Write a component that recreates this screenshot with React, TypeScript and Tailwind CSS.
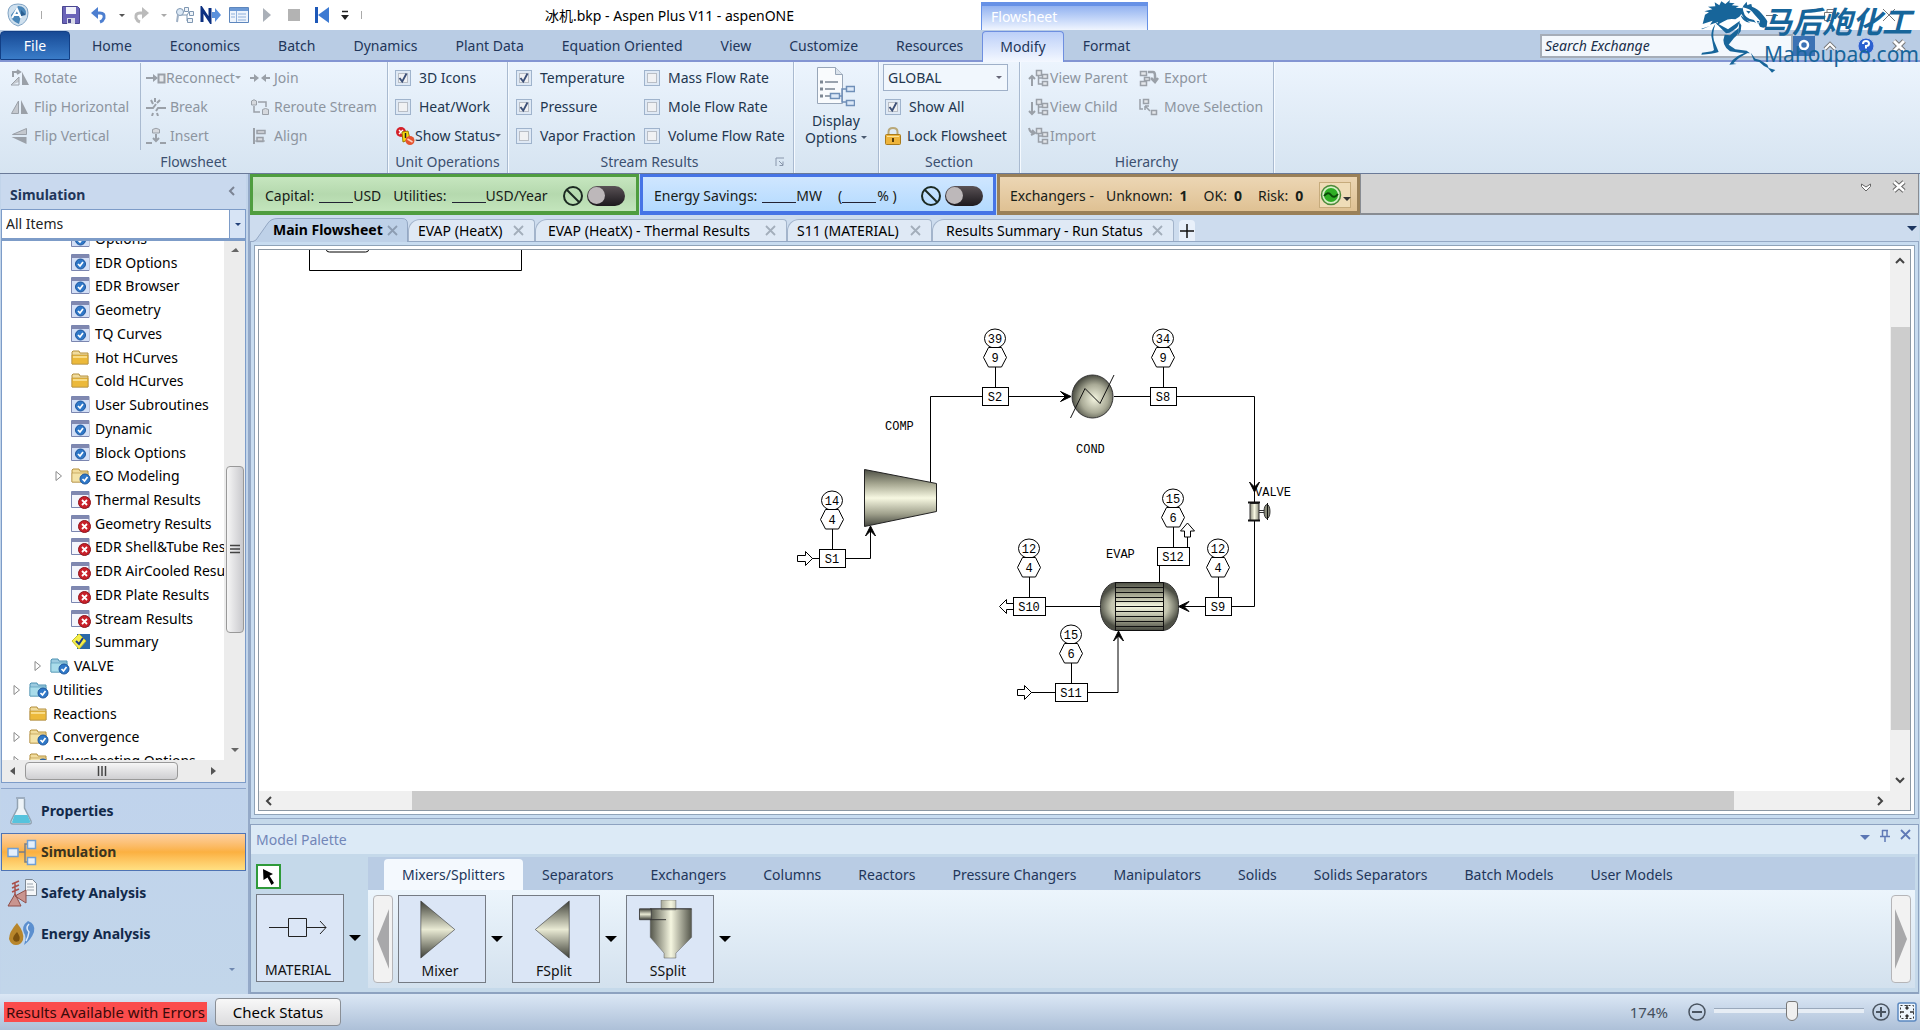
import type { ReactNode } from "react";

/* ---------- generic pieces ---------- */

const GRAY = "#9aa0a8";
const BLUE = "#6f8fb8";

function Ico({ children, w = 20, h = 18 }: { children: ReactNode; w?: number; h?: number }) {
  return (
    <svg width={w} height={h} viewBox={`0 0 ${w} ${h}`} className="shrink-0" aria-hidden="true">
      {children}
    </svg>
  );
}

function Caret({ color = "#4a5a70", size = 8 }: { color?: string; size?: number }) {
  return (
    <svg width={size} height={size / 2} viewBox="0 0 8 4" className="shrink-0" aria-hidden="true">
      <path d="M0 0h8L4 4z" fill={color} />
    </svg>
  );
}

function Check({ label, on = false }: { label: string; on?: boolean }) {
  return (
    <label className="flex h-[29px] items-center gap-2">
      <span className="grid size-4 place-items-center">
        <input
          type="checkbox"
          defaultChecked={on}
          className="peer col-start-1 row-start-1 size-4 appearance-none border border-[#9fb3cc] bg-[#f0f1f3] shadow-[inset_0_0_0_2px_#dfe9f5,inset_0_0_0_3px_#b9bec6]"
        />
        <svg
          viewBox="0 0 12 12"
          className="pointer-events-none invisible col-start-1 row-start-1 size-3 peer-checked:visible"
          aria-hidden="true"
        >
          <path d="M2.5 6l2.7 3.6L9.5 1.5" fill="none" stroke="#3c5078" strokeWidth="1.9" />
        </svg>
      </span>
      {label}
    </label>
  );
}

function Tool({
  label,
  icon,
  muted = true,
  caret = false,
  tight = false,
}: {
  label: string;
  icon: ReactNode;
  muted?: boolean;
  caret?: boolean;
  tight?: boolean;
}) {
  return (
    <button
      type="button"
      className={`flex h-[29px] items-center whitespace-nowrap ${tight ? "gap-0" : "gap-1"} ${
        muted ? "text-[#8d95a0]" : "text-[#22364f]"
      }`}
    >
      {icon}
      {label}
      {caret && <Caret color={muted ? GRAY : "#4a5a70"} size={6} />}
    </button>
  );
}

function Group({ width, title, corner, children }: { width: string; title: string; corner?: boolean; children: ReactNode }) {
  return (
    <section className={`flex shrink-0 flex-col border-r border-[#a9bad0] shadow-[1px_0_0_#f5faff] ${width}`}>
      <div className="h-[89px] pt-px">{children}</div>
      <div className="flex items-center justify-center text-[#3c5070]">
        <span className="grow text-center leading-[22px]">{title}</span>
        {corner && (
          <button type="button" aria-label="More stream result options" className="mr-2 -ml-4">
            <Ico w={10} h={10}>
              <path d="M1 9V1h8M4 4l4 4M8 4.5V8.500H4.500" fill="none" stroke="#8896ab" />
            </Ico>
          </button>
        )}
      </div>
    </section>
  );
}

/* ---------- ribbon icons ---------- */

const RotateIcon = (
  <Ico>
    <path d="M3 8V3h6M7 1l3 2-3 2" fill="none" stroke={GRAY} strokeWidth="2" />
    <path d="M1 16l8-3V8z" fill="#c4c8ce" />
    <path d="M1 16h8V8z" fill="none" stroke={GRAY} />
    <path d="M12 3l7 13h-7z" fill={GRAY} />
  </Ico>
);
const FlipHIcon = (
  <Ico>
    <path d="M8.500 3v12.500h-7z" fill="#c4c8ce" stroke={GRAY} />
    <path d="M11 2l7 14h-7z" fill={GRAY} />
  </Ico>
);
const FlipVIcon = (
  <Ico>
    <path d="M16.500 1.500v6h-14z" fill="#c4c8ce" stroke={GRAY} />
    <path d="M1.500 10h15v7z" fill={GRAY} />
  </Ico>
);
const ReconnectIcon = (
  <Ico>
    <path d="M0 8h7V5l5 4-5 4v-3H0z" fill={GRAY} />
    <path d="M12.500 5.500h6v8h-6z" fill="#e6e9ed" stroke={GRAY} strokeWidth="2" />
  </Ico>
);
const BreakIcon = (
  <Ico>
    <path d="M0 10h7l3-4M20 10h-8l-2 3M5 2l2 4M9 0v4M14 2l-3 3M6 18l1-3M12 18l-1-3" fill="none" stroke={GRAY} strokeWidth="2" />
  </Ico>
);
const InsertIcon = (
  <Ico>
    <path d="M6.500 6V2.500Q10 0 13.500 2.500V6z" fill="#d6d9de" stroke={GRAY} />
    <path d="M10 7v6M7 11l3 3 3-3M0 16h6M14 16h6" fill="none" stroke={GRAY} strokeWidth="2" />
  </Ico>
);
const JoinIcon = (
  <Ico>
    <path d="M0 8h4V5l5 4-5 4v-3H0zM20 8h-4V5l-5 4 5 4v-3h4z" fill={GRAY} />
  </Ico>
);
const RerouteIcon = (
  <Ico>
    <path d="M1.500 7V3Q4 .5 6.500 3v4zM12.500 16.500v-5q3-2 6 0v5z" fill="#d6d9de" stroke={GRAY} />
    <path d="M4 8v6h6M8 4h8v5" fill="none" stroke={GRAY} strokeWidth="1.500" />
  </Ico>
);
const AlignIcon = (
  <Ico>
    <path d="M4 1v16" stroke={GRAY} strokeWidth="2" />
    <path d="M7 3.500h8v3H7zM7 10.500h6v4H7z" fill="#d6d9de" stroke={GRAY} strokeWidth="1.500" />
    <path d="M5 14h10" stroke={GRAY} />
  </Ico>
);
const StatusIcon = (
  <Ico>
    <circle cx="6" cy="5" r="5" fill="#d4202a" />
    <path d="M4 3l4 4M8 3L4 7" stroke="#fff" strokeWidth="1.500" />
    <path d="M7 5l6-1 2 8-7 3z" fill="#f7d90f" stroke="#9a7b00" />
    <path d="M10.500 6v5" stroke="#222" strokeWidth="1.500" />
    <circle cx="15" cy="13.500" r="4.500" fill="#e5532f" />
    <path d="M12.500 12l5 3" stroke="#fbd0bf" strokeWidth="1.500" />
  </Ico>
);
const LockIcon = (
  <Ico>
    <path d="M5.500 9V5q0-4 4.500-4t4.500 4v4" fill="none" stroke="#b9a878" strokeWidth="2" />
    <rect x="2.500" y="7.500" width="15" height="10" rx="1" fill="#eeb43b" stroke="#a87a1c" />
    <path d="M4 9.500h12" stroke="#fbe39a" />
    <path d="M10 11v4" stroke="#5a3d08" strokeWidth="2" />
  </Ico>
);

function TreeGlyph({ arrow }: { arrow: string }) {
  return (
    <Ico w={22}>
      <path d="M8.500 1.500h5v5h-5zM14.500 5.500h5v4h-5zM14.500 12.500h5v4h-5z" fill="#e3e6ea" stroke={GRAY} strokeWidth="1.500" />
      <path d="M10.500 7v8h4M10.500 9h4" fill="none" stroke={GRAY} strokeWidth="1.500" />
      <path d={arrow} fill="none" stroke={GRAY} strokeWidth="2" />
    </Ico>
  );
}
const ExportIcon = (
  <Ico w={22}>
    <path d="M2.500 2.500h6v4h-6zM6.500 8.500h5v3h-5zM2.500 12.500h6v4h-6z" fill="#e3e6ea" stroke={GRAY} strokeWidth="1.500" />
    <path d="M10 3h5q2 0 2 4v5M13 9l4 4 3-4" fill="none" stroke={GRAY} strokeWidth="2.500" />
  </Ico>
);
const MoveIcon = (
  <Ico w={22}>
    <path d="M5.500 1.500h5v4h-5zM13.500 12.500h5v4h-5z" fill="#e3e6ea" stroke={GRAY} strokeWidth="1.500" />
    <path d="M2 1v10h3M7 8h4M7 8v4M7 8l5 5" fill="none" stroke={GRAY} strokeWidth="1.500" />
  </Ico>
);

/* ---------- title bar ---------- */

function TitleBar() {
  return (
    <header className="flex h-[30px] items-center bg-white text-black">
      <div className="flex w-[545px] shrink-0 items-center pl-[7px]">
        <svg width="22" height="24" viewBox="0 0 22 24" aria-hidden="true">
          <path d="M11 1q10 0 10 9 0 10-10 13Q1 20 1 10 1 1 11 1z" fill="#cfe0ee" stroke="#7fa3c4" />
          <path d="M11 3q8 0 8 8l-5 2-2 8q-8-3-8-9z" fill="#4a86b8" />
          <path d="M5 15l5-9 4 9M7 12h6" fill="none" stroke="#fff" strokeWidth="2" />
          <path d="M14 7l5 5-5 1z" fill="#2b5f92" />
        </svg>
        <span className="ml-3 h-2 w-px bg-[#aaa]" />
        <button type="button" aria-label="Save" className="ml-5">
          <Ico w={18}>
            <path d="M.5.5h15l2 2v15H.5z" fill="#6a63b8" stroke="#4a4790" />
            <path d="M4 1h10v7H4z" fill="#f2f2fa" />
            <path d="M5 12h8v6H5z" fill="#d9dbe8" />
            <path d="M6 13h3v4H6z" fill="#4a4790" />
          </Ico>
        </button>
        <button type="button" aria-label="Undo" className="ml-[11px] flex items-center gap-3">
          <Ico w={16}>
            <path d="M4 7h5q5 0 4 5-1 3-4 4" fill="none" stroke="#4d7fd0" strokeWidth="3" />
            <path d="M7 1v12L0 7z" fill="#4d7fd0" />
          </Ico>
          <Caret color="#555" size={6} />
        </button>
        <button type="button" aria-label="Redo" className="ml-2 flex items-center gap-3">
          <Ico w={16}>
            <path d="M12 7H7q-5 0-4 5 1 3 4 4" fill="none" stroke="#bbb" strokeWidth="3" />
            <path d="M9 1v12l7-6z" fill="#bbb" />
          </Ico>
          <Caret color="#aaa" size={6} />
        </button>
        <button type="button" aria-label="Model summary" className="ml-2">
          <Ico>
            <path d="M9.500 1.500h4v4h-4zM14.500 5.500h4v4h-4zM12.500 12.500h5v4h-5z" fill="#eef3f8" stroke="#7f97b2" />
            <path d="M6 9h6l2-3M12 9v6" fill="none" stroke="#7f97b2" />
            <circle cx="5" cy="6" r="3.500" fill="#dbe8f5" stroke="#7f97b2" />
            <path d="M3 9l-1 7" stroke="#9fb0c4" strokeWidth="2" />
          </Ico>
        </button>
        <button type="button" aria-label="Next" className="ml-[5px]">
          <Ico w={22}>
            <path d="M2 16V3l8 12V2" fill="none" stroke="#0b2f80" strokeWidth="3" />
            <path d="M12 6h3V2l6 7-6 7v-4h-3z" fill="#5a90dc" />
          </Ico>
        </button>
        <button type="button" aria-label="Control panel" className="ml-[7px]">
          <Ico>
            <path d="M.5 1.500h19v15H.5z" fill="#eef4fc" stroke="#5d86bd" />
            <path d="M1 2h18v3H1z" fill="#6d9ad6" />
            <path d="M7.500 5v11M9 8h8M9 11h8M9 14h8M2 8h4M2 11h4" stroke="#8fb0dc" />
          </Ico>
        </button>
        <button type="button" aria-label="Run" className="ml-[13px]">
          <Ico w={10}>
            <path d="M1 2l8 7-8 7z" fill="#aab0b8" />
          </Ico>
        </button>
        <button type="button" aria-label="Stop" className="ml-4">
          <Ico w={12}>
            <path d="M0 3h12v12H0z" fill="#b3b3b3" />
          </Ico>
        </button>
        <button type="button" aria-label="Reset" className="ml-[14px]">
          <Ico w={16}>
            <path d="M1 1h3v16H1z" fill="#1d58b8" />
            <path d="M15 1v16L4 9z" fill="#3d7ad2" />
          </Ico>
        </button>
        <button type="button" aria-label="Customize toolbar" className="ml-[11px]">
          <Ico w={8} h={10}>
            <path d="M1 1.500h6" stroke="#222" strokeWidth="1.500" />
            <path d="M0 5h8L4 10z" fill="#222" />
          </Ico>
        </button>
        <span className="ml-3 h-2 w-px bg-[#aaa]" />
      </div>
      <h1 className="w-[436px] shrink-0 pt-[2px] whitespace-nowrap">冰机.bkp - Aspen Plus V11 - aspenONE</h1>
      <div className="mt-[2px] h-7 w-[167px] shrink-0 border-x border-t-4 border-[#6691e6] bg-linear-to-b from-[#92b2f0] to-[#f0f5fe] px-[9px] leading-[22px] text-white">
        Flowsheet
      </div>
      <div className="flex grow items-center justify-end gap-[46px] pr-6 text-[#777]">
        <button type="button" aria-label="Minimize">
          <Ico w={12} h={12}>
            <path d="M0 6.500h12" stroke="#777" />
          </Ico>
        </button>
        <button type="button" aria-label="Restore">
          <Ico w={12} h={12}>
            <path d="M.5 3.500h8v8h-8zM3 3V.5h8.500V9H9" fill="none" stroke="#777" />
          </Ico>
        </button>
        <button type="button" aria-label="Close">
          <Ico w={14} h={14}>
            <path d="M1 1l12 12M13 1L1 13" stroke="#777" />
          </Ico>
        </button>
      </div>
    </header>
  );
}

const ribbonTabs = [
  "Home", "Economics", "Batch", "Dynamics", "Plant Data", "Equation Oriented",
  "View", "Customize", "Resources", "Modify", "Format",
];

function TabBar() {
  return (
    <nav className="flex h-8 items-end border-b-2 border-[#8395d2] bg-[#b9cce4] text-[#22365a]">
      <button type="button" className="mr-[3px] h-[29px] w-[70px] rounded-t border border-[#123f86] bg-linear-to-b from-[#174a96] to-[#3a7cc8] pt-px text-white">
        File
      </button>
      {ribbonTabs.map((t) => (
        <button
          key={t}
          type="button"
          className={
            t === "Modify"
              ? "-mb-[2px] h-[31px] rounded-t border border-b-0 border-[#6e8fe0] bg-linear-to-b from-[#bccff8] to-[#f4f8ff] px-[17px]"
              : "h-[29px] px-[19px] pt-px whitespace-nowrap"
          }
        >
          {t}
        </button>
      ))}
      <div className="flex grow items-center justify-end self-center pt-px pr-[14px]">
        <input
          aria-label="Search Exchange"
          placeholder="Search Exchange"
          className="h-6 w-[253px] border-2 border-[#a5adb8] bg-[#f3f8fd] px-[3px] italic text-[#1a2f4a] placeholder:text-[#1a2f4a]"
        />
        <button type="button" aria-label="Search" className="grid h-5 w-[22px] place-items-center bg-[#3c72b4]">
          <Ico w={14} h={14}>
            <circle cx="7" cy="6" r="4" fill="none" stroke="#fff" strokeWidth="2.500" />
          </Ico>
        </button>
        <button type="button" aria-label="Collapse ribbon" className="ml-2">
          <Ico w={14} h={12}>
            <path d="M2 9l5-5 5 5" fill="none" stroke="#777" strokeWidth="4" />
            <path d="M2 9l5-5 5 5" fill="none" stroke="#fff" strokeWidth="2" />
          </Ico>
        </button>
        <button type="button" aria-label="Help" className="ml-5">
          <Ico w={18}>
            <circle cx="9" cy="9" r="8" fill="#2b5fd0" stroke="#b8c8ea" />
            <path d="M6 7q0-3 3-3t3 2.500Q12 9 9 9v2.500M9 13v2" fill="none" stroke="#fff" strokeWidth="2" />
          </Ico>
        </button>
        <button type="button" aria-label="Close document" className="ml-[17px]">
          <Ico w={14} h={14}>
            <path d="M2 2l10 10M12 2L2 12" stroke="#777" strokeWidth="5" />
            <path d="M2 2l10 10M12 2L2 12" stroke="#fff" strokeWidth="3" />
          </Ico>
        </button>
      </div>
    </nav>
  );
}

function Ribbon() {
  return (
    <div className="flex h-[112px] border-b border-[#6a7a98] bg-linear-to-b from-[#ecf4fd] to-[#d6e4f1] text-[#22364f]">
      <Group width="w-[388px]" title="Flowsheet">
        <div className="flex">
          <div className="w-[141px] border-r border-[#a9bad0] pl-[10px]">
            <Tool label="Rotate" icon={RotateIcon} />
            <Tool label="Flip Horizontal" icon={FlipHIcon} />
            <Tool label="Flip Vertical" icon={FlipVIcon} />
          </div>
          <div className="w-[109px] pl-[5px]">
            <Tool label="Reconnect" icon={ReconnectIcon} caret tight />
            <Tool label="Break" icon={BreakIcon} />
            <Tool label="Insert" icon={InsertIcon} />
          </div>
          <div>
            <Tool label="Join" icon={JoinIcon} />
            <Tool label="Reroute Stream" icon={RerouteIcon} />
            <Tool label="Align" icon={AlignIcon} />
          </div>
        </div>
      </Group>
      <Group width="w-[120px]" title="Unit Operations">
        <div className="pl-[7px]">
          <Check label="3D Icons" on />
          <Check label="Heat/Work" />
          <Tool label="Show Status" icon={StatusIcon} muted={false} caret tight />
        </div>
      </Group>
      <Group width="w-[286px]" title="Stream Results" corner>
        <div className="flex">
          <div className="w-[136px] pl-2">
            <Check label="Temperature" on />
            <Check label="Pressure" on />
            <Check label="Vapor Fraction" />
          </div>
          <div>
            <Check label="Mass Flow Rate" />
            <Check label="Mole Flow Rate" />
            <Check label="Volume Flow Rate" />
          </div>
        </div>
      </Group>
      <Group width="w-[85px]" title="">
        <button type="button" className="flex w-full flex-col items-center pt-1 leading-[17px]">
          <svg width="38" height="42" viewBox="0 0 38 42" aria-hidden="true">
            <path d="M.5.500h18l7 7v29H.5z" fill="#f9fbfd" stroke="#98a6b8" />
            <path d="M18.500.500v7h7" fill="#dbe3ec" stroke="#98a6b8" />
            <path d="M8 15h13M8 22h10M8 29h8" stroke="#9aa3ae" strokeWidth="2" />
            <path d="M3 15h3M3 22h3M3 29h3" stroke="#7d8793" strokeWidth="3" />
            <path d="M21 29h4V22h5M25 29v6h5" fill="none" stroke={BLUE} strokeWidth="1.500" />
            <path d="M13.500 26.500h9v5h-9zM29.500 19.500h8v5h-8zM29.500 33.500h8v5h-8z" fill="#dce9f8" stroke={BLUE} strokeWidth="1.500" />
          </svg>
          <span className="mt-[3px]">Display</span>
          <span className="flex items-center gap-1">
            Options <Caret size={6} />
          </span>
        </button>
      </Group>
      <Group width="w-[141px]" title="Section">
        <div className="pl-1">
          <div className="flex h-[29px] items-center">
            <div className="grid w-[125px] items-center">
              <select aria-label="Section" className="col-start-1 row-start-1 h-[27px] w-full appearance-none border border-[#9fb0c8] bg-[#f1f7fd] px-1">
                <option>GLOBAL</option>
              </select>
              <span className="pointer-events-none col-start-1 row-start-1 justify-self-end pr-[6px]">
                <Caret color="#667" size={6} />
              </span>
            </div>
          </div>
          <div className="pl-[2px]">
            <Check label="Show All" on />
          </div>
          <Tool label="Lock Flowsheet" icon={LockIcon} muted={false} />
        </div>
      </Group>
      <Group width="w-[254px]" title="Hierarchy">
        <div className="flex">
          <div className="w-[118px] pl-2">
            <Tool label="View Parent" icon={<TreeGlyph arrow="M4 17V7M1 10l3-3 3 3" />} tight />
            <Tool label="View Child" icon={<TreeGlyph arrow="M4 4v12M1 13l3 3 3-3" />} tight />
            <Tool label="Import" icon={<TreeGlyph arrow="M1 1q1 5 5 5M4 3l3 3-4 2" />} tight />
          </div>
          <div>
            <Tool label="Export" icon={ExportIcon} />
            <Tool label="Move Selection" icon={MoveIcon} />
          </div>
        </div>
      </Group>
    </div>
  );
}

/* ---------- sidebar ---------- */

type Kind = "form" | "folder" | "folderok" | "blueok" | "error" | "summary";

const tree: { label: string; kind: Kind; level: string; open?: boolean }[] = [
  { label: "Options", kind: "form", level: "pl-[53px]" },
  { label: "EDR Options", kind: "form", level: "pl-[53px]" },
  { label: "EDR Browser", kind: "form", level: "pl-[53px]" },
  { label: "Geometry", kind: "form", level: "pl-[53px]" },
  { label: "TQ Curves", kind: "form", level: "pl-[53px]" },
  { label: "Hot HCurves", kind: "folder", level: "pl-[53px]" },
  { label: "Cold HCurves", kind: "folder", level: "pl-[53px]" },
  { label: "User Subroutines", kind: "form", level: "pl-[53px]" },
  { label: "Dynamic", kind: "form", level: "pl-[53px]" },
  { label: "Block Options", kind: "form", level: "pl-[53px]" },
  { label: "EO Modeling", kind: "folderok", level: "pl-[53px]", open: true },
  { label: "Thermal Results", kind: "error", level: "pl-[53px]" },
  { label: "Geometry Results", kind: "error", level: "pl-[53px]" },
  { label: "EDR Shell&Tube Results", kind: "error", level: "pl-[53px]" },
  { label: "EDR AirCooled Results", kind: "error", level: "pl-[53px]" },
  { label: "EDR Plate Results", kind: "error", level: "pl-[53px]" },
  { label: "Stream Results", kind: "error", level: "pl-[53px]" },
  { label: "Summary", kind: "summary", level: "pl-[53px]" },
  { label: "VALVE", kind: "blueok", level: "pl-[32px]", open: true },
  { label: "Utilities", kind: "blueok", level: "pl-[11px]", open: true },
  { label: "Reactions", kind: "folder", level: "pl-[11px]" },
  { label: "Convergence", kind: "folderok", level: "pl-[11px]", open: true },
  { label: "Flowsheeting Options", kind: "folderok", level: "pl-[11px]", open: true },
];

function OkBadge({ x, y }: { x: number; y: number }) {
  return (
    <>
      <circle cx={x} cy={y} r="5" fill="#2f78c8" stroke="#1d559c" />
      <path d={`M${x - 2.5} ${y}l2 2 3-4`} fill="none" stroke="#fff" strokeWidth="1.700" />
    </>
  );
}

function TreeIcon({ kind }: { kind: Kind }) {
  return (
    <Ico>
      {(kind === "form" || kind === "error") && (
        <>
          <path d="M.5.500h17.500v16H.5z" fill="#f3f5fc" stroke="#7b86b0" />
          <path d="M1 1h17v3H1z" fill="#8088b0" />
          {kind === "form" && <path d="M1 4h17v12H1z" fill="#d3dff6" />}
        </>
      )}
      {kind === "form" && <OkBadge x={9.5} y={10} />}
      {kind === "error" && (
        <>
          <circle cx="13.500" cy="11.500" r="6" fill="#c8202a" stroke="#8e1219" />
          <path d="M11 9l5 5M16 9l-5 5" stroke="#fff" strokeWidth="1.800" />
        </>
      )}
      {(kind === "folder" || kind === "folderok") && (
        <>
          <path d="M1 15V3l1-1h6l1 2h8v11z" fill="#f1dc9d" stroke="#b48f3c" />
          <path d="M1 6h16v9H1z" fill={kind === "folder" ? "#ecb93a" : "#f4e3a8"} stroke="#b48f3c" strokeWidth=".6" />
          {kind === "folder" && <path d="M2 7h14v2H2z" fill="#f8dc88" />}
        </>
      )}
      {kind === "blueok" && (
        <>
          <path d="M1 15V3l1-1h6l1 2h8v11z" fill="#9ccbe0" stroke="#4f93b3" />
          <path d="M1 6h16v9H1z" fill="#a9dcea" stroke="#4f93b3" strokeWidth=".6" />
        </>
      )}
      {(kind === "folderok" || kind === "blueok") && <OkBadge x={14} y={12} />}
      {kind === "summary" && (
        <>
          <path d="M6 1h13v15H6z" fill="#2c69a8" />
          <path d="M8 1l7 7-7 8-7-8z" fill="#f4ee4c" stroke="#c8c02a" />
          <path d="M5 8l3 3 4-6" fill="none" stroke="#183a8a" strokeWidth="2" />
        </>
      )}
    </Ico>
  );
}

const modes: { label: string; icon: ReactNode }[] = [
  {
    label: "Properties",
    icon: (
      <Ico w={28} h={28}>
        <path d="M9 1h9M10.500 2v9L4 24q-1 3 2 3h16q3 0 2-3l-6.500-13V2" fill="#eef4f8" stroke="#93a3b2" strokeWidth="1.500" />
        <path d="M7.500 18h13l3 7q0 1-2 1h-15q-2 0-1.500-1z" fill="#56c3dd" />
      </Ico>
    ),
  },
  {
    label: "Simulation",
    icon: (
      <Ico w={30} h={28}>
        <path d="M12 14h6M18 14V6h4M18 14v10h4" fill="none" stroke="#7a7f86" strokeWidth="1.500" />
        <path d="M1 10.500h10v8H1zM20.500 2.500h8v8h-8zM20.500 19.500h8v7h-8z" fill="#e4effc" stroke="#6f9fd6" strokeWidth="1.500" />
      </Ico>
    ),
  },
  {
    label: "Safety Analysis",
    icon: (
      <Ico w={30} h={28}>
        <path d="M18.500.500h7l4 4v12h-11z" fill="#f5f7f9" stroke="#7d8894" />
        <path d="M20 5h6M20 8h7M20 11h7" stroke="#9aa4ae" />
        <path d="M1 27l7-12 6 12zM8 17l11-6v13z" fill="#c99590" stroke="#8f4f4a" />
        <path d="M8 16V3M5 5l7-3M5 9l7-3M5 13l7-3" fill="none" stroke="#a8504c" strokeWidth="1.500" />
      </Ico>
    ),
  },
  {
    label: "Energy Analysis",
    icon: (
      <Ico w={30} h={28}>
        <path d="M10 3q8 10 6 17-2 5-7 5t-7-6Q2 12 10 3z" fill="#b8862b" />
        <path d="M10 12q4 5 2 9-5 2-6-2 0-3 4-7z" fill="#7c520f" />
        <path d="M21 1q8 3 6 11-3 8-10 13 3-8 0-12-3-7 4-12z" fill="#5b8fcf" />
        <path d="M22 4q-4 4 0 8-1 6-3 9" fill="none" stroke="#dbe9fa" strokeWidth="1.500" />
      </Ico>
    ),
  },
];

function Grip({ vertical = false }: { vertical?: boolean }) {
  return (
    <svg width="10" height="10" viewBox="0 0 10 10" className={vertical ? "" : "rotate-90"} aria-hidden="true">
      <path d="M0 1.500h10M0 5h10M0 8.500h10" stroke="#444" strokeWidth="1.500" />
    </svg>
  );
}

function Sidebar() {
  return (
    <aside className="flex w-[250px] shrink-0 flex-col border-r-2 border-[#94a9c8] bg-[#c1d4ea] pr-[2px] pl-px">
      <div className="flex h-[35px] shrink-0 items-center justify-between bg-[#c9d9ee] pt-[6px] pr-[10px] pl-[9px] font-bold text-[#22365a]">
        Simulation
        <button type="button" aria-label="Collapse navigation" className="pb-2">
          <Ico w={8} h={10}>
            <path d="M6 1L2 5l4 4" fill="none" stroke="#7b8494" strokeWidth="2" />
          </Ico>
        </button>
      </div>
      <div className="grid shrink-0 items-center">
        <select aria-label="Filter" className="col-start-1 row-start-1 h-[30px] w-full appearance-none border border-[#7d9cc8] bg-white px-1 text-[#222]">
          <option>All Items</option>
        </select>
        <span className="pointer-events-none col-start-1 row-start-1 mr-px grid h-[28px] w-4 place-items-center justify-self-end border-l border-[#7d9cc8] bg-[#d7e4f5]">
          <Caret color="#24427a" size={6} />
        </span>
      </div>
      <div className="flex min-h-0 grow flex-col border border-t-2 border-[#7d9cc8] bg-white">
        <div className="flex min-h-0 grow">
          <ul className="-mt-[14px] -mb-[13px] grid h-[546px] min-w-0 grow auto-rows-fr overflow-hidden text-black [clip-path:inset(14px_0_13px_0)]">
            {tree.map((n) => (
              <li key={n.label} className={`flex items-center whitespace-nowrap ${n.level}`}>
                <span className="w-4 shrink-0">
                  {n.open && (
                    <Ico w={8} h={12}>
                      <path d="M1 1.500v9L6.500 6z" fill="#fff" stroke="#8a8a8a" />
                    </Ico>
                  )}
                </span>
                <TreeIcon kind={n.kind} />
                <span className="pl-1">{n.label}</span>
              </li>
            ))}
          </ul>
          <div className="flex w-[21px] shrink-0 flex-col items-center justify-between bg-[#ececec] pt-[6px] pb-2">
            <Ico w={8} h={6}>
              <path d="M0 5h8L5 1z" fill="#666" />
            </Ico>
            <div className="mt-[97px] grid h-[167px] w-[18px] place-items-center rounded-sm border border-[#999] bg-linear-to-r from-[#f6f6f6] to-[#c9c9cd]">
              <Grip vertical />
            </div>
            <Caret color="#666" />
          </div>
        </div>
        <div className="flex h-[22px] shrink-0 items-center bg-[#ececec] pr-[29px] pl-2">
          <svg width="5" height="8" viewBox="0 0 5 8" aria-hidden="true"><path d="M5 0v8L0 4z" fill="#555" /></svg>
          <div className="ml-[10px] grid h-[18px] w-[153px] place-items-center rounded-sm border border-[#999] bg-linear-to-b from-[#f6f6f6] to-[#cfcfd2]">
            <Grip />
          </div>
          <svg width="5" height="8" viewBox="0 0 5 8" className="ml-auto" aria-hidden="true"><path d="M0 0v8l5-4z" fill="#555" /></svg>
        </div>
      </div>
      <div className="mb-[1px] h-[6px] shrink-0 border-b border-[#8ea6cc] bg-[#c3d4ec]" />
      <nav className="flex h-[204px] shrink-0 flex-col gap-[3px] bg-linear-to-b from-[#c0d3ec] to-[#c2d6ea] pt-[2px] font-bold text-[#12294a]">
        {modes.map((m) => (
          <button
            key={m.label}
            type="button"
            className={`flex h-[38px] items-center gap-1 border pl-[5px] ${
              m.label === "Simulation"
                ? "border-[#4f74b4] bg-linear-to-b from-[#fdd0a0] via-[#fbb040] to-[#ffe082] text-[#3a3420]"
                : "border-transparent"
            }`}
          >
            <span className="w-[30px]">{m.icon}</span>
            {m.label}
          </button>
        ))}
        <button type="button" aria-label="Configure buttons" className="mt-3 mr-[11px] self-end">
          <Caret color="#6f88b0" size={6} />
        </button>
      </nav>
    </aside>
  );
}

/* ---------- activation strip ---------- */

function Toggle({ label }: { label: string }) {
  return (
    <div className="flex items-center gap-[3px]">
      <Ico w={22} h={22}>
        <circle cx="11" cy="11" r="9" fill="none" stroke="#1c2a22" strokeWidth="2" />
        <path d="M5 5l12 12" stroke="#1c2a22" strokeWidth="2" />
      </Ico>
      <button
        type="button"
        role="switch"
        aria-checked="false"
        aria-label={label}
        className="flex h-5 w-[38px] items-center rounded-full bg-linear-to-b from-[#5a5256] to-[#1d1a1e] p-px"
      >
        <span className="size-[17px] rounded-full bg-[#bdb8ba]" />
      </button>
    </div>
  );
}

function Blank() {
  return <span className="mt-[13px] ml-[5px] inline-block h-px w-[34px] bg-[#223]" />;
}

function Strip() {
  return (
    <div className="flex h-[41px] shrink-0 text-[#182018]">
      <div className="flex w-[389px] items-center border-3 border-b-4 border-[#4f9d3f] bg-linear-to-b from-[#c6e6bf] via-[#b5d9ae] to-[#c3e5bc] pt-[3px] pr-[11px] pl-3">
        <span>Capital:</span><Blank /><span>USD</span>
        <span className="ml-3">Utilities:</span><Blank /><span>USD/Year</span>
        <div className="ml-auto"><Toggle label="Economics analysis" /></div>
      </div>
      <div className="ml-px flex w-[356px] items-center border-3 border-b-4 border-[#4674e6] bg-linear-to-b from-[#cfe6ff] to-[#b3dafe] pt-[3px] pr-[10px] pl-[11px]">
        <span>Energy Savings:</span><Blank /><span>MW</span>
        <span className="ml-4">(</span><span className="mt-[13px] inline-block h-px w-[34px] bg-[#223]" /><span className="ml-px">% )</span>
        <div className="ml-auto"><Toggle label="Energy analysis" /></div>
      </div>
      <div className="ml-px flex w-[363px] items-center border-3 border-b-4 border-[#9a8058] bg-linear-to-b from-[#ecd6b4] to-[#dfc193] pt-[3px] pr-[6px] pl-[10px]">
        <span>Exchangers -</span>
        <span className="ml-3">Unknown:</span><b className="ml-[7px]">1</b>
        <span className="ml-4">OK:</span><b className="ml-[7px]">0</b>
        <span className="ml-4">Risk:</span><b className="ml-[7px]">0</b>
        <button type="button" aria-label="Exchanger status" className="mb-[2px] ml-auto flex h-[26px] w-8 items-end gap-px border border-[#c6ab7c] bg-[#efdcb8] pb-px">
          <Ico w={22} h={22}>
            <circle cx="11" cy="11" r="9.500" fill="#d8efc8" stroke="#4c8a3a" strokeWidth="1.500" />
            <circle cx="11" cy="11" r="7" fill="#2fae26" />
            <path d="M4 12q4-5 7-1t7-1" fill="none" stroke="#0a4a08" strokeWidth="2" />
          </Ico>
          <span className="pb-[5px]"><Caret color="#333" size={8} /></span>
        </button>
      </div>
      <div className="flex grow items-start justify-end gap-5 border border-t-0 border-b-2 border-[#888c92] bg-[#d3d3d3] pt-[6px] pr-3">
        <button type="button" aria-label="Strip options" className="pt-[2px]">
          <Ico w={12} h={10}>
            <path d="M1.500 2l4.500 3 4.500-3v2.500L6 9 1.500 4.500z" fill="#fff" stroke="#666" />
          </Ico>
        </button>
        <button type="button" aria-label="Close strip">
          <Ico w={14} h={13}>
            <path d="M2 2l10 9M12 2L2 11" stroke="#666" strokeWidth="4.500" />
            <path d="M2 2l10 9M12 2L2 11" stroke="#fff" strokeWidth="2.500" />
          </Ico>
        </button>
      </div>
    </div>
  );
}

/* ---------- document tabs ---------- */

const docs = [
  { label: "EVAP (HeatX)", w: "w-[127px] pl-[9px]" },
  { label: "EVAP (HeatX) - Thermal Results", w: "w-[252px] pl-3" },
  { label: "S11 (MATERIAL)", w: "w-[145px] pl-[9px]" },
  { label: "Results Summary - Run Status", w: "w-[242px] pl-[13px]" },
];

function CloseX({ color = "#a3aebb" }: { color?: string }) {
  return (
    <Ico w={11} h={11}>
      <path d="M1 1l9 9M10 1l-9 9" stroke={color} strokeWidth="1.800" />
    </Ico>
  );
}

function DocTabs() {
  return (
    <div className="flex h-[26px] shrink-0 items-end bg-[#cddcee] pl-[2px] text-black">
      <div className="relative -mb-px flex h-6 w-[156px] items-center justify-between pr-[10px] pl-[21px] font-bold">
        <svg viewBox="0 0 156 24" className="absolute inset-0 size-full" aria-hidden="true">
          <path d="M0 24L4 22 16 5Q19 .5 26 .5H150Q155.500.5 155.500 6V24" fill="#bed1e8" stroke="#94a8c4" />
        </svg>
        <span className="relative whitespace-nowrap">Main Flowsheet</span>
        <button type="button" aria-label="Close Main Flowsheet" className="relative"><CloseX color="#8d9db2" /></button>
      </div>
      {docs.map((d) => (
        <div
          key={d.label}
          className={`flex h-[22px] items-center justify-between rounded-tl-xl rounded-tr border border-b-0 border-[#a3b4cb] bg-[#dfe9f5] pr-[10px] whitespace-nowrap ${d.w}`}
        >
          {d.label}
          <button type="button" aria-label={`Close ${d.label}`}><CloseX /></button>
        </div>
      ))}
      <button type="button" aria-label="New tab" className="ml-[5px] grid h-[21px] w-4 place-items-center rounded-t bg-[#e8f0fa]">
        <Ico w={14} h={14}>
          <path d="M7 0v14M0 7h14" stroke="#111" strokeWidth="1.500" />
        </Ico>
      </button>
      <button type="button" aria-label="Tab list" className="mr-[2px] mb-[10px] ml-auto"><Caret color="#1c3560" size={10} /></button>
    </div>
  );
}

/* ---------- flowsheet drawing ---------- */

const streams = [
  { id: "S1", x: 833, y: 549, w: 26, t: 14, p: 4 },
  { id: "S2", x: 996, y: 387, w: 26, t: 39, p: 9 },
  { id: "S8", x: 1164, y: 387, w: 26, t: 34, p: 9 },
  { id: "S12", x: 1174, y: 547, w: 32, t: 15, p: 6 },
  { id: "S9", x: 1219, y: 597, w: 26, t: 12, p: 4 },
  { id: "S10", x: 1030, y: 597, w: 32, t: 12, p: 4 },
  { id: "S11", x: 1072, y: 683, w: 32, t: 15, p: 6 },
];

function Stream({ id, x, y, w, t, p }: (typeof streams)[number]) {
  return (
    <g transform={`translate(${x} ${y})`} textAnchor="middle">
      <rect x={-w / 2 + 0.5} y=".5" width={w} height="18" fill="#fff" stroke="#000" />
      <text x="0" y="14" stroke="none">{id}</text>
      <path d="M.5 0v-20" stroke="#000" fill="none" />
      <ellipse cx="0" cy="-48.500" rx="10.500" ry="9.500" fill="#fff" stroke="#000" />
      <path d="M-11.500-29.500l5-10h13l5 10-5 9.500h-13z" fill="#fff" stroke="#000" />
      <text x="0" y="-44">{t}</text>
      <text x="0" y="-25">{p}</text>
    </g>
  );
}

function Flowsheet() {
  return (
    <svg className="h-full w-full" aria-label="Process flowsheet" role="img">
      <defs>
        <linearGradient id="metalV" x1="0" y1="0" x2="0" y2="1">
          <stop offset="0" stopColor="#4c4e44" />
          <stop offset=".25" stopColor="#a5a690" />
          <stop offset=".5" stopColor="#f7f8e2" />
          <stop offset=".78" stopColor="#9fa08c" />
          <stop offset="1" stopColor="#43453d" />
        </linearGradient>
        <linearGradient id="metalH">
          <stop offset="0" stopColor="#8a8b7c" />
          <stop offset=".5" stopColor="#f7f8e2" />
          <stop offset="1" stopColor="#8a8b7c" />
        </linearGradient>
        <radialGradient id="metalR" cx=".55" cy=".55" r=".55">
          <stop offset="0" stopColor="#f4f5e0" />
          <stop offset=".6" stopColor="#a9aa96" />
          <stop offset="1" stopColor="#4a4c42" />
        </radialGradient>
        <radialGradient id="shell" cx=".5" cy=".5" r=".52">
          <stop offset="0" stopColor="#f7f8e2" />
          <stop offset=".7" stopColor="#c4c5b0" />
          <stop offset="1" stopColor="#4e5046" />
        </radialGradient>
      </defs>
      <g transform="translate(-260 -250)" fontFamily='"Liberation Mono", monospace' fontSize="12" fill="#000">
        <path d="M310.500 240v30.500h212V240M327.500 240v10q0 2 3 2h36q3 0 3-2V240" fill="none" stroke="#000" />

        <path
          d="M812 558.500h8M847 558.500h24.500V529M931.500 482V396.500H983M1010 396.500h60M1115 396.500h36M1178 396.500h77.500V503M1255.500 521v85.500H1233M1206 606.500h-24M1047 606.500h54M1160.500 583V566M1188.500 547V537M1032 692.500h24M1089 692.500h30V634"
          fill="none"
          stroke="#000"
        />
        <path d="M871.500 526l5 10-5-5-5 5zM1072 396.500l-10.500 5 5-5-5-5zM1255.500 492l-5-10 5 5 5-5zM1179.500 606.500l10.500-5-5 5 5 5zM1119.500 631l5 10-5-5-5 5z" stroke="#000" />
        <path
          d="M798.500 555.500h8v-4l7 7-7 7v-4h-8zM1018.500 689.500h7v-4l7 7-7 7v-4h-7zM1014.500 603.500h-7v-4l-7 7 7 7v-4h7zM1185.500 537v-6h-4l7-8 7 8h-4v6z"
          fill="#fff"
          stroke="#000"
        />

        <path d="M865.500 469.500l72 14v28l-72 15z" fill="url(#metalV)" stroke="#222" />
        <ellipse cx="1093.500" cy="396.500" rx="20.500" ry="21.500" fill="url(#metalR)" stroke="#333" />
        <path d="M1071.500 418l14.500-29.500 15 15 14-28.500" fill="none" stroke="#111" />

        <rect x="1101.500" y="582.500" width="78" height="48" rx="16" ry="22" fill="url(#shell)" stroke="#333" />
        <path d="M1116.500 582.500h48v48h-48z" fill="url(#metalV)" stroke="#111" />
        <path d="M1116 587.500h49M1116 592.500h49M1116 597.500h49M1116 601.500h49M1116 606.500h49M1116 611.500h49M1116 616.500h49M1116 621.500h49M1116 626.500h49" stroke="#111" />

        <path d="M1251 503.500h9v17h-9z" fill="url(#metalH)" stroke="#333" />
        <path d="M1249 502.500h12M1249 520.500h12" stroke="#111" strokeWidth="2" />
        <path d="M1260 510.500h6M1260 512.500h6" stroke="#333" />
        <ellipse cx="1268" cy="511.500" rx="3" ry="7" fill="#8a8c7a" stroke="#333" />
        <path d="M1268.500 503v17" stroke="#111" />

        <text x="886" y="430">COMP</text>
        <text x="1077" y="453">COND</text>
        <text x="1107" y="558">EVAP</text>
        <text x="1256" y="496">VALVE</text>
        {streams.map((s) => (
          <Stream key={s.id} {...s} />
        ))}
      </g>
    </svg>
  );
}

function Chevron({ d }: { d: string }) {
  return (
    <Ico w={12} h={12}>
      <path d={d} fill="none" stroke="#444" strokeWidth="2" />
    </Ico>
  );
}

function Workspace() {
  return (
    <div className="flex min-h-0 grow flex-col border border-[#94a8c4] bg-[#c8dcf0] p-[3px]">
      <div className="grid min-h-0 grow grid-cols-[minmax(0,1fr)_21px] grid-rows-[minmax(0,1fr)_20px] border border-[#8fa3b8] bg-white p-[3px] [&>*]:min-h-0">
        <div className="overflow-hidden border-t border-l border-[#8c98a4]">
          <Flowsheet />
        </div>
        <div className="flex flex-col items-center border-t border-r border-[#8c98a4] bg-[#f0f0f0] py-[5px]">
          <Chevron d="M2 8l4-4 4 4" />
          <div className="mt-[60px] h-[403px] w-[19px] bg-[#cdcdcd]" />
          <span className="mt-auto"><Chevron d="M2 4l4 4 4-4" /></span>
        </div>
        <div className="flex items-center border-b border-l border-[#8c98a4] bg-[#f0f0f0] px-1">
          <Chevron d="M8 2L4 6l4 4" />
          <div className="ml-[137px] h-[19px] w-[1322px] bg-[#cbcbcb]" />
          <span className="ml-auto"><Chevron d="M4 2l4 4-4 4" /></span>
        </div>
        <div className="border-r border-b border-[#8c98a4] bg-[#f0f0f0]" />
      </div>
    </div>
  );
}

/* ---------- model palette ---------- */

const paletteTabs = [
  "Mixers/Splitters", "Separators", "Exchangers", "Columns", "Reactors", "Pressure Changers",
  "Manipulators", "Solids", "Solids Separators", "Batch Models", "User Models",
];

const blocks: { label: string; art: ReactNode }[] = [
  { label: "Mixer", art: <path d="M10.500 1v58L45 30z" fill="url(#palV)" stroke="#333" strokeWidth=".6" /> },
  { label: "FSplit", art: <path d="M45.500 1v58L11 30z" fill="url(#palV)" stroke="#333" strokeWidth=".6" /> },
  {
    label: "SSplit",
    art: (
      <>
        <path d="M23 0h15v10H23zM12 9h42v29L38 54v5H26v-5L12 38z" fill="url(#palH)" stroke="#555" strokeWidth=".5" />
        <path d="M1 9h12v11H1z" fill="url(#palV)" stroke="#444" />
        <path d="M12 9h42M12 20h16" stroke="#333" />
      </>
    ),
  },
];

function BlockButton({ label, children }: { label: string; children: ReactNode }) {
  return (
    <div className="flex items-center gap-[5px]">
      <button type="button" className="flex h-[88px] w-[88px] flex-col items-center justify-between border border-[#757b84] bg-[#dbe6f6] pt-1 pr-1 pb-px text-[#111]">
        {children}
        <span className="leading-[20px]">{label}</span>
      </button>
      <button type="button" aria-label={`${label} icons`}><Caret color="#000" size={12} /></button>
    </div>
  );
}

function Palette() {
  return (
    <section className="mt-[5px] flex shrink-0 flex-col border border-b-2 border-[#8da2c0] bg-[#c5d9ea]">
      <svg width="0" height="0" className="absolute" aria-hidden="true">
        <defs>
          <linearGradient id="palV" x1="0" y1="0" x2="0" y2="1">
            <stop offset="0" stopColor="#3e4038" />
            <stop offset=".5" stopColor="#e9ead4" />
            <stop offset="1" stopColor="#3e4038" />
          </linearGradient>
          <linearGradient id="palH">
            <stop offset="0" stopColor="#55574c" />
            <stop offset=".5" stopColor="#f5f6e0" />
            <stop offset="1" stopColor="#55574c" />
          </linearGradient>
        </defs>
      </svg>
      <div className="flex h-[29px] items-center bg-[#dceaf6] pr-[7px] pl-[5px] text-[#7286b8]">
        <h2 className="grow">Model Palette</h2>
        <div className="flex items-start gap-[10px] pb-2">
          <button type="button" aria-label="Palette options" className="pt-[6px]"><Caret color="#5a76b4" size={10} /></button>
          <button type="button" aria-label="Pin palette">
            <Ico w={10} h={13}>
              <path d="M2.500 1v6.500M7 1v6.500M2 1.500h6M0 7.500h10M5 8v5" fill="none" stroke="#5f79b6" strokeWidth="1.500" />
            </Ico>
          </button>
          <button type="button" aria-label="Close palette"><CloseX color="#5f79b6" /></button>
        </div>
      </div>
      <div className="flex pt-[3px] pr-[3px] pb-1">
        <div className="w-[117px] shrink-0 pt-[7px] pl-[5px]">
          <button type="button" aria-label="Select" className="mb-[5px] grid size-[25px] place-items-center border-2 border-[#2f9a3a] bg-white">
            <svg width="14" height="18" viewBox="0 0 14 18" aria-hidden="true">
              <path d="M1 1l10 5-3.500 1.800L12 15l-2.500 2L5.500 9.500 1.500 12z" fill="#000" />
            </svg>
          </button>
          <BlockButton label="MATERIAL">
            <svg width="60" height="58" viewBox="0 0 60 58" aria-hidden="true">
              <path d="M1 28.500h19M39 28.500h19M20.500 19.500h18v18h-18zM52 22l6 6.500-6 6.500" fill="none" stroke="#222" />
            </svg>
          </BlockButton>
        </div>
        <div className="min-w-0 grow">
          <nav className="flex h-[33px] items-end bg-[#b9cce4] pl-4 text-[#22365a]">
            {paletteTabs.map((t, i) => (
              <button
                key={t}
                type="button"
                className={`mr-px h-[31px] px-[18px] whitespace-nowrap ${i === 0 ? "rounded-t bg-[#f4f9fe]" : ""}`}
              >
                {t}
              </button>
            ))}
          </nav>
          <div className="flex h-[98px] items-center bg-linear-to-b from-[#ecf5fc] to-[#d3e1ee] pr-1 pl-[5px]">
            <button type="button" aria-label="Scroll left" className="mr-[5px] grid h-[88px] w-5 place-items-center rounded border border-[#b5b5b8] bg-[#f2f2f2]">
              <Ico w={12} h={60}>
                <path d="M12 0v60L0 30z" fill="#a8a8aa" />
              </Ico>
            </button>
            <div className="flex gap-[9px]">
              {blocks.map((b) => (
                <BlockButton key={b.label} label={b.label}>
                  <svg width="60" height="60" viewBox="0 0 60 60" className="mb-[2px]" aria-hidden="true">{b.art}</svg>
                </BlockButton>
              ))}
            </div>
            <button type="button" aria-label="Scroll right" className="ml-auto grid h-[88px] w-5 place-items-center rounded border border-[#b5b5b8] bg-[#f2f2f2]">
              <Ico w={12} h={60}>
                <path d="M0 0v60l12-30z" fill="#a8a8aa" />
              </Ico>
            </button>
          </div>
        </div>
      </div>
    </section>
  );
}

/* ---------- status bar ---------- */

function StatusBar() {
  return (
    <footer className="flex h-9 shrink-0 items-center bg-linear-to-b from-[#dbe7f5] to-[#adc0d8] pr-[3px] pl-1 text-[15px] text-[#222]">
      <span className="bg-[#fb4c4c] px-[2px] leading-[20px] whitespace-nowrap text-[#3a0a0a]">Results Available with Errors</span>
      <button type="button" className="ml-2 h-[28px] w-[126px] rounded border border-[#8a8f96] bg-linear-to-b from-[#f8f8f8] to-[#dcdcde] text-black">
        Check Status
      </button>
      <span className="mr-5 ml-auto text-[#44505e]">174%</span>
      <button type="button" aria-label="Zoom out">
        <Ico w={18}>
          <circle cx="9" cy="9" r="8" fill="none" stroke="#4a5460" strokeWidth="1.500" />
          <path d="M4 9h10" stroke="#4a5460" strokeWidth="2" />
        </Ico>
      </button>
      <input
        type="range"
        aria-label="Zoom"
        min={0}
        max={100}
        defaultValue={52}
        className="mx-2 mb-1 h-5 w-[150px] appearance-none bg-transparent [&::-webkit-slider-runnable-track]:h-[5px] [&::-webkit-slider-runnable-track]:border-t [&::-webkit-slider-runnable-track]:border-[#9aa9bc] [&::-webkit-slider-runnable-track]:bg-[#e6edf5] [&::-webkit-slider-thumb]:-mt-2 [&::-webkit-slider-thumb]:h-5 [&::-webkit-slider-thumb]:w-3 [&::-webkit-slider-thumb]:appearance-none [&::-webkit-slider-thumb]:rounded-t-sm [&::-webkit-slider-thumb]:rounded-b-lg [&::-webkit-slider-thumb]:border [&::-webkit-slider-thumb]:border-[#777] [&::-webkit-slider-thumb]:bg-[#efefef]"
      />
      <button type="button" aria-label="Zoom in">
        <Ico w={18}>
          <circle cx="9" cy="9" r="8" fill="none" stroke="#4a5460" strokeWidth="1.500" />
          <path d="M4 9h10M9 4v10" stroke="#4a5460" strokeWidth="2" />
        </Ico>
      </button>
      <button type="button" aria-label="Zoom to fit" className="ml-[7px]">
        <Ico h={20}>
          <rect x="1" y="1" width="18" height="18" rx="2" fill="#eef5fc" stroke="#5b88c0" strokeWidth="1.500" />
          <path d="M10 3v4M10 13v4M3 10h4M13 10h4M8.500 5.500L10 7l1.500-1.500M8.500 14.500L10 13l1.500 1.500" fill="none" stroke="#333" strokeWidth="1.500" />
          <path d="M3.500 3.500h13v13h-13z" fill="none" stroke="#333" strokeDasharray="2 2" />
        </Ico>
      </button>
    </footer>
  );
}

/* ---------- watermark ---------- */

function Watermark() {
  return (
    <div className="pointer-events-none absolute top-0 right-0 h-[76px] w-[230px] text-[#17659a]">
      <svg width="90" height="76" viewBox="0 0 270 228" className="absolute top-0 left-0" fill="currentColor" aria-hidden="true">
        <path d="M45 44l12-7-14-3 24-6-13-8 22-1-2-12 14 9 6-12 12 8 14-12-2 8 16 2-9 6 22 2-10 5 20 2 3-8 10-12 2 11q8-4 12-4l2 8q18 6 28 20 14 16 18 24l-2 16-10 3-10-3-4-8-14-6-14-2q-14-3-20-16l-4-6-6 8-12 8q-20-4-34 6l-22 12 4-10-24 8 8-12-30 10z" />
        <path d="M158 22q24 4 34 20l18 20-2 8-8 2-8-12-14-4q-18-6-20-34z" fill="#fff" />
        <path d="M168 32l14 2-6 7zM200 62l8 2-4 6zM152 46q4 14 18 20l10 2-14-12z" />
        <path d="M72 64l20 12 22 12 36-26-6 16q-6 10-26 20l-10 2-16-16zM148 66l6 10-2 18-8 12z" />
        <path d="M146 84q2 18-14 30l-16 20 20 14 34 4 10 8-30-2-30-4Q92 134 104 104l16 2z" />
        <path d="M76 72q-10 30-4 50l14 34q-20 6-52 8l2-6 30-4 6-4-8-42q0-20 12-36z" />
        <path d="M34 86l26-8-24 10zM172 160q-26 12-42 30l10 2-22 2 10-14q14-14 36-22z" />
        <path d="M182 158l14 18 14 4 22 14 4 10 20 6-10 8-12-14-12-6-14-12-16-4z" />
      </svg>
      <span className="absolute top-[3px] right-[8px] text-[30px] leading-[38px] font-bold whitespace-nowrap italic">马后炮化工</span>
      <span className="absolute top-[40px] right-px text-[21px] leading-[28px]">Mahoupao.com</span>
    </div>
  );
}

export default function App() {
  return (
    <div className='relative flex min-h-screen flex-col overflow-hidden bg-[#c5d9ea] font-["Noto_Sans","Noto_Sans_CJK_SC",sans-serif] text-[14px] leading-[20px]'>
      <TitleBar />
      <TabBar />
      <Ribbon />
      <div className="flex grow">
        <Sidebar />
        <main className="flex min-w-0 grow flex-col pr-px">
          <Strip />
          <DocTabs />
          <Workspace />
          <Palette />
        </main>
      </div>
      <StatusBar />
      <Watermark />
    </div>
  );
}
